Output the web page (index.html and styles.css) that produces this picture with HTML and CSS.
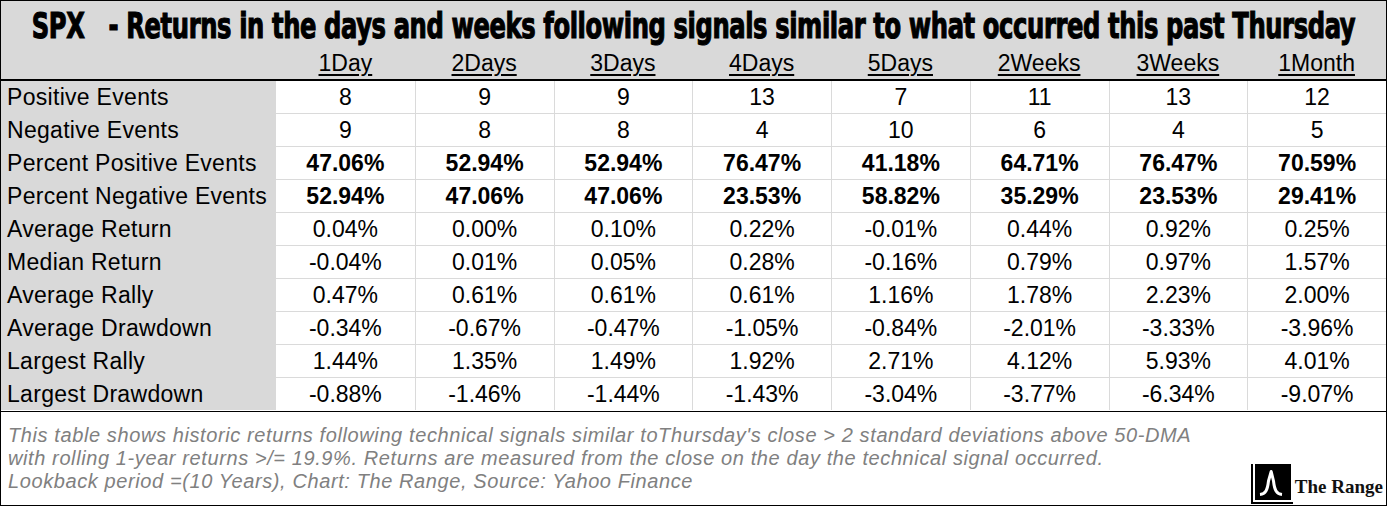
FILE: index.html
```html
<!DOCTYPE html>
<html lang="en">
<head>
<meta charset="utf-8">
<title>SPX Returns</title>
<link rel="stylesheet" href="styles.css">
</head>
<body>
<div class="sheet">
  <div class="head">
    <div class="title"><span class="title-text">SPX&nbsp;&nbsp;&nbsp;- Returns in the days and weeks following signals similar to what occurred this past Thursday</span></div>
    <div class="cols">
      <div class="corner"></div>
      <div class="ch"><span>1Day</span></div>
      <div class="ch"><span>2Days</span></div>
      <div class="ch"><span>3Days</span></div>
      <div class="ch"><span>4Days</span></div>
      <div class="ch"><span>5Days</span></div>
      <div class="ch"><span>2Weeks</span></div>
      <div class="ch"><span>3Weeks</span></div>
      <div class="ch"><span>1Month</span></div>
    </div>
  </div>
  <div class="grid">
    <div class="lbl">Positive Events</div>
    <div class="c">8</div><div class="c">9</div><div class="c">9</div><div class="c">13</div><div class="c">7</div><div class="c">11</div><div class="c">13</div><div class="c">12</div>

    <div class="lbl">Negative Events</div>
    <div class="c">9</div><div class="c">8</div><div class="c">8</div><div class="c">4</div><div class="c">10</div><div class="c">6</div><div class="c">4</div><div class="c">5</div>

    <div class="lbl">Percent Positive Events</div>
    <div class="c b">47.06%</div><div class="c b">52.94%</div><div class="c b">52.94%</div><div class="c b">76.47%</div><div class="c b">41.18%</div><div class="c b">64.71%</div><div class="c b">76.47%</div><div class="c b">70.59%</div>

    <div class="lbl">Percent Negative Events</div>
    <div class="c b">52.94%</div><div class="c b">47.06%</div><div class="c b">47.06%</div><div class="c b">23.53%</div><div class="c b">58.82%</div><div class="c b">35.29%</div><div class="c b">23.53%</div><div class="c b">29.41%</div>

    <div class="lbl">Average Return</div>
    <div class="c">0.04%</div><div class="c">0.00%</div><div class="c">0.10%</div><div class="c">0.22%</div><div class="c">-0.01%</div><div class="c">0.44%</div><div class="c">0.92%</div><div class="c">0.25%</div>

    <div class="lbl">Median Return</div>
    <div class="c">-0.04%</div><div class="c">0.01%</div><div class="c">0.05%</div><div class="c">0.28%</div><div class="c">-0.16%</div><div class="c">0.79%</div><div class="c">0.97%</div><div class="c">1.57%</div>

    <div class="lbl">Average Rally</div>
    <div class="c">0.47%</div><div class="c">0.61%</div><div class="c">0.61%</div><div class="c">0.61%</div><div class="c">1.16%</div><div class="c">1.78%</div><div class="c">2.23%</div><div class="c">2.00%</div>

    <div class="lbl">Average Drawdown</div>
    <div class="c">-0.34%</div><div class="c">-0.67%</div><div class="c">-0.47%</div><div class="c">-1.05%</div><div class="c">-0.84%</div><div class="c">-2.01%</div><div class="c">-3.33%</div><div class="c">-3.96%</div>

    <div class="lbl">Largest Rally</div>
    <div class="c">1.44%</div><div class="c">1.35%</div><div class="c">1.49%</div><div class="c">1.92%</div><div class="c">2.71%</div><div class="c">4.12%</div><div class="c">5.93%</div><div class="c">4.01%</div>

    <div class="lbl last">Largest Drawdown</div>
    <div class="c last">-0.88%</div><div class="c last">-1.46%</div><div class="c last">-1.44%</div><div class="c last">-1.43%</div><div class="c last">-3.04%</div><div class="c last">-3.77%</div><div class="c last">-6.34%</div><div class="c last">-9.07%</div>
  </div>
  <div class="foot">
    <p class="note">This table shows historic returns following technical signals similar toThursday's close &gt; 2 standard deviations above 50-DMA<br>with rolling 1-year returns &gt;/= 19.9%. Returns are measured from the close on the day the technical signal occurred.<br>Lookback period =(10 Years), Chart: The Range, Source: Yahoo Finance</p>
    <div class="logo">
      <svg class="logo-mark" width="42" height="40" viewBox="0 0 42 40" aria-hidden="true">
        <path d="M1 0 V39 H42" fill="none" stroke="#000" stroke-width="2"/>
        <rect x="4" y="0" width="36" height="36" fill="#000"/>
        <path d="M9 30.5 C14.5 30 16.5 26 17.5 17 L20.2 7.5 L22.5 17 C23.5 26 25.5 30 31 30.5" fill="none" stroke="#fff" stroke-width="3" stroke-linejoin="round"/>
      </svg>
      <span class="logo-text">The Range</span>
    </div>
  </div>
</div>
</body>
</html>
```
FILE: styles.css
```css
html, body {
  margin: 0;
  padding: 0;
  background: #fff;
}

.sheet {
  box-sizing: border-box;
  width: 1387px;
  height: 506px;
  border: 1px solid #000;
  font-family: "Liberation Sans", Arial, sans-serif;
  color: #000;
  display: flex;
  flex-direction: column;
}

.head {
  background: #d9d9d9;
  border-bottom: 2px solid #000;
  height: 80px;
  box-sizing: border-box;
}

.title {
  height: 46px;
  display: flex;
  justify-content: center;
  align-items: flex-start;
  overflow: visible;
  white-space: nowrap;
}

.title-text {
  display: inline-block;
  font-family: "DejaVu Sans", sans-serif;
  font-stretch: condensed;
  font-weight: 700;
  font-size: 35px;
  line-height: 46px;
  padding-top: 2px;
  transform: scaleX(0.769);
  -webkit-text-stroke: 1.1px #000;
  letter-spacing: -0.5px;
}

.cols {
  display: grid;
  grid-template-columns: 275px repeat(8, 1fr);
  height: 32px;
}

.ch {
  text-align: center;
  font-size: 23px;
  line-height: 32px;
}

.ch span {
  text-decoration: underline;
  text-decoration-thickness: 2px;
  text-underline-offset: 3px;
}

.grid {
  display: grid;
  grid-template-columns: 275px repeat(8, 1fr);
  grid-auto-rows: 33px;
  border-bottom: 1px solid #000;
}

.lbl {
  background: #d9d9d9;
  font-size: 23px;
  line-height: 32px;
  padding-left: 6px;
  letter-spacing: 0.3px;
  white-space: nowrap;
}

.c {
  box-sizing: border-box;
  text-align: center;
  font-size: 23px;
  line-height: 32px;
  border-bottom: 1px solid #dadada;
  border-left: 1px solid #dadada;
}

.lbl + .c {
  border-left: none;
}

.c.last {
  border-bottom: none;
}

.grid .last {
  height: 32px;
}

.b {
  font-weight: 700;
}

.foot {
  flex: 1;
  display: flex;
  justify-content: space-between;
  align-items: flex-end;
  padding: 0 3px 1px 7px;
}

.note {
  margin: 0;
  align-self: flex-start;
  padding-top: 12px;
  font-style: italic;
  font-size: 20px;
  letter-spacing: 0.6px;
  line-height: 23px;
  color: #808080;
}

.logo {
  display: flex;
  align-items: flex-start;
  gap: 2px;
  height: 40px;
}

.logo-mark {
  display: block;
}

.logo-text {
  font-family: "Liberation Serif", "Times New Roman", serif;
  font-weight: 700;
  font-size: 19px;
  line-height: 19px;
  margin-top: 13px;
  color: #111;
}
```
